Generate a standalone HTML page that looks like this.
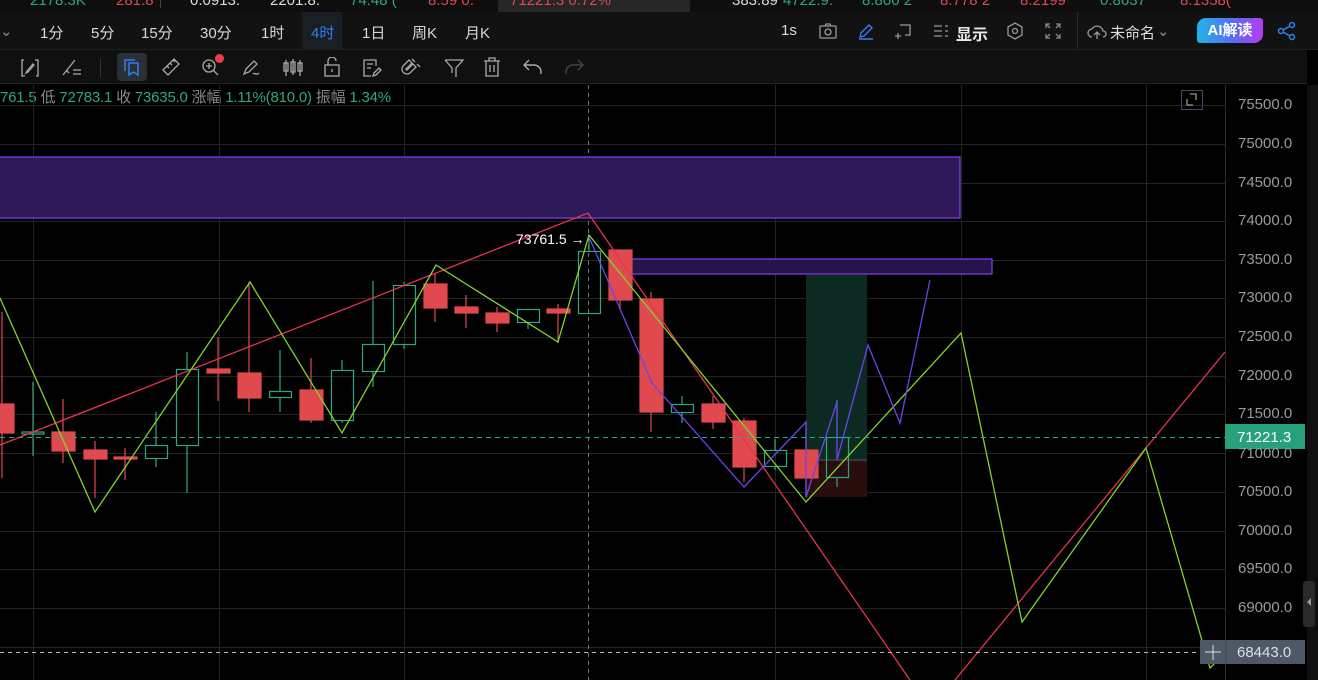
<!DOCTYPE html>
<html><head><meta charset="utf-8">
<style>
*{margin:0;padding:0;box-sizing:border-box}
body{width:1318px;height:680px;overflow:hidden;background:#000;font-family:"Liberation Sans","Noto Sans CJK SC",sans-serif;color:#ddd;position:relative}
.abs{position:absolute}
#top{left:0;top:0;width:1318px;height:12px;background:#0e0e0e;overflow:hidden;font-size:15px;line-height:6px;white-space:nowrap}
#top span{position:absolute;top:-2px}
#tf{left:0;top:12px;width:1318px;height:38px;background:#121212;border-bottom:1px solid #1f1f1f}
#tf .t{position:absolute;top:10px;font-size:15px;color:#d8d8d8}
#tb{left:0;top:50px;width:1307px;height:34px;background:#101010;border-bottom:1px solid #222}
#info{left:0;top:86px;font-size:15px;color:#2ea781;white-space:nowrap;letter-spacing:-0.2px}
#info b{font-weight:normal;color:#8a8a8a}
.ax{position:absolute;left:1238px;font-size:15px;color:#9a9a9a}
</style></head><body>
<div id="top" class="abs">
<span style="left:30px;color:#2ea781">2178.3K</span>
<span style="left:116px;color:#e0484f">281.8</span>
<span style="left:160px;top:-2px;width:1px;height:10px;background:#444"></span>
<span style="left:190px;color:#ddd">0.0913:</span>
<span style="left:270px;color:#ddd">2201.8:</span>
<span style="left:350px;color:#2ea781">74.48 (</span>
<span style="left:428px;color:#e0484f">8.59 0.</span>
<span style="left:498px;width:192px;height:12px;top:0;background:#262626"></span>
<span style="left:510px;color:#e0484f">71221.3 0.72%</span>
<span style="left:732px;color:#ddd">383.89</span>
<span style="left:783px;color:#2ea781">4722.9:</span>
<span style="left:862px;color:#2ea781">8.800 2</span>
<span style="left:940px;color:#e0484f">8.778 2</span>
<span style="left:1020px;color:#e0484f">8.2199</span>
<span style="left:1100px;color:#2ea781">0.8637</span>
<span style="left:1180px;color:#e0484f">8.1358(</span>
</div>
<div id="tf" class="abs">
<span class="t" style="left:0;color:#888">⌄</span>
<span class="t" style="left:40px">1分</span>
<span class="t" style="left:91px">5分</span>
<span class="t" style="left:141px">15分</span>
<span class="t" style="left:200px">30分</span>
<span class="t" style="left:261px">1时</span>
<div class="abs" style="left:302px;top:0;width:40px;height:37px;background:#1a1f26"></div>
<span class="t" style="left:311px;color:#2f7ff0">4时</span>
<span class="t" style="left:362px">1日</span>
<span class="t" style="left:412px">周K</span>
<span class="t" style="left:465px">月K</span>
<span class="t" style="left:781px">1s</span>
<svg class="abs" style="left:818px;top:10px" width="20" height="18" viewBox="0 0 20 18" fill="none" stroke="#999" stroke-width="1.3"><rect x="2" y="4" width="16" height="12" rx="1"/><path d="M7 4l1-2h4l1 2"/><circle cx="10" cy="10" r="3"/></svg>
<svg class="abs" style="left:857px;top:10px" width="18" height="18" viewBox="0 0 18 18" fill="none" stroke="#2f7ff0" stroke-width="1.4"><path d="M3 15l1-4 8-8 3 3-8 8z M2 17h14"/></svg>
<svg class="abs" style="left:895px;top:10px" width="18" height="18" viewBox="0 0 18 18" fill="none" stroke="#999" stroke-width="1.3"><path d="M5 3h10v10h-5M3 11v6M0 14h6"/></svg>
<svg class="abs" style="left:934px;top:13px" width="14" height="12" viewBox="0 0 14 12" fill="none" stroke="#999" stroke-width="1.3"><path d="M0 1h8M0 6h8M0 11h8M11 1h3M11 6h3M11 11h3"/></svg>
<span class="t" style="left:956px;color:#e8e8e8;font-weight:bold;font-size:16px;top:9px">显示</span>
<svg class="abs" style="left:1006px;top:10px" width="18" height="18" viewBox="0 0 18 18" fill="none" stroke="#999" stroke-width="1.3"><path d="M9 1l7 4v8l-7 4-7-4V5z"/><circle cx="9" cy="9" r="2.5"/></svg>
<svg class="abs" style="left:1045px;top:11px" width="16" height="16" viewBox="0 0 16 16" fill="none" stroke="#888" stroke-width="1.3"><path d="M1 5V1h4M11 1h4v4M15 11v4h-4M5 15H1v-4M1 1l4 4M15 1l-4 4M15 15l-4-4M1 15l4-4"/></svg>
<div class="abs" style="left:1077px;top:0;width:1px;height:37px;background:#2a2a2a"></div>
<svg class="abs" style="left:1087px;top:11px" width="20" height="18" viewBox="0 0 20 18" fill="none" stroke="#999" stroke-width="1.3"><path d="M5 14a4 4 0 010-8 6 6 0 0111 2 3 3 0 010 6M10 16V9M7 12l3-3 3 3"/></svg>
<span class="t" style="left:1110px;color:#ddd">未命名</span>
<span class="t" style="left:1157px;color:#888">⌄</span>
<div class="abs" style="left:1197px;top:6px;width:66px;height:25px;border-radius:9px 3px 9px 3px;background:linear-gradient(90deg,#1fb5e6,#5a6cf0 55%,#b43cf0);color:#fff;font-size:15px;font-weight:bold;text-align:center;line-height:25px">AI解读</div>
<svg class="abs" style="left:1277px;top:9px" width="20" height="20" viewBox="0 0 20 20" fill="none" stroke="#2f7ff0" stroke-width="1.5"><circle cx="15" cy="4" r="2.5"/><circle cx="4" cy="10" r="2.5"/><circle cx="15" cy="16" r="2.5"/><path d="M6 9l7-4M6 11l7 4"/></svg>
</div>
<div id="tb" class="abs">
<svg class="abs" style="left:20px;top:8px" width="20" height="20" viewBox="0 0 20 20" fill="none" stroke="#aaa" stroke-width="1.3"><path d="M4 2h-2v16h3M16 18h2V2h-3M7 13l6-7 1 1-6 7-2 1z"/></svg>
<svg class="abs" style="left:61px;top:8px" width="22" height="20" viewBox="0 0 22 20" fill="none" stroke="#aaa" stroke-width="1.3"><path d="M2 17L14 2M12 12h8M12 16h8M5 12l3 3"/></svg>
<div class="abs" style="left:100px;top:9px;width:1px;height:18px;background:#333"></div>
<div class="abs" style="left:117px;top:3px;width:30px;height:28px;border-radius:4px;background:#2b2f36"></div>
<svg class="abs" style="left:123px;top:8px" width="18" height="18" viewBox="0 0 18 18" fill="none" stroke="#2f7ff0" stroke-width="1.5"><path d="M2 13V2h10M6 5h9v12l-4.5-3-4.5 3z"/></svg>
<svg class="abs" style="left:161px;top:7px" width="20" height="20" viewBox="0 0 20 20" fill="none" stroke="#aaa" stroke-width="1.3"><path d="M2 13L13 2l5 5L7 18zM6 9l2 2M9 6l2 2M12 3l2 2"/></svg>
<svg class="abs" style="left:201px;top:7px" width="22" height="22" viewBox="0 0 22 22" fill="none" stroke="#aaa" stroke-width="1.3"><circle cx="8" cy="9" r="6"/><path d="M12 13l5 5M5 9h6M8 6v6"/></svg>
<div class="abs" style="left:215px;top:4px;width:9px;height:9px;border-radius:50%;background:#e8404a"></div>
<svg class="abs" style="left:242px;top:8px" width="20" height="20" viewBox="0 0 20 20" fill="none" stroke="#aaa" stroke-width="1.3"><path d="M2 16l2-5 8-8 3 3-8 8zM11 16c2-2 3 2 6-1"/></svg>
<svg class="abs" style="left:283px;top:8px" width="20" height="18" viewBox="0 0 20 18" fill="none" stroke="#aaa" stroke-width="1.3"><rect x="1" y="5" width="4" height="8"/><rect x="8" y="4" width="4" height="10"/><rect x="15" y="5" width="4" height="8"/><path d="M3 2v16M10 1v16M17 2v16"/></svg>
<svg class="abs" style="left:323px;top:7px" width="18" height="20" viewBox="0 0 18 20" fill="none" stroke="#aaa" stroke-width="1.3"><rect x="2" y="8" width="14" height="11"/><path d="M5 8V4a4 4 0 018 0M9 12v3"/></svg>
<svg class="abs" style="left:362px;top:8px" width="20" height="20" viewBox="0 0 20 20" fill="none" stroke="#aaa" stroke-width="1.3"><path d="M14 8V2H2v16h7M5 6h6M5 10h4M11 18l1-3 5-5 2 2-5 5z"/></svg>
<svg class="abs" style="left:401px;top:8px" width="20" height="20" viewBox="0 0 20 20" fill="none" stroke="#aaa" stroke-width="1.3"><path d="M8 2L2 8a5 5 0 007 7l6-6-3-3-6 6a1 1 0 01-1-1l6-6zM11 1l3 3M16 6l3 3"/></svg>
<svg class="abs" style="left:444px;top:8px" width="20" height="20" viewBox="0 0 20 20" fill="none" stroke="#aaa" stroke-width="1.3"><path d="M1 2h18l-7 8v9M1 2l7 8v5"/></svg>
<svg class="abs" style="left:483px;top:7px" width="18" height="20" viewBox="0 0 18 20" fill="none" stroke="#aaa" stroke-width="1.3"><path d="M1 4h16M6 4V1h6v3M3 4v15h12V4M7 8v7M11 8v7"/></svg>
<svg class="abs" style="left:523px;top:9px" width="20" height="16" viewBox="0 0 20 16" fill="none" stroke="#aaa" stroke-width="1.4"><path d="M6 1L1 6l5 5M1 6h10a7 7 0 017 7v2"/></svg>
<svg class="abs" style="left:564px;top:9px" width="20" height="16" viewBox="0 0 20 16" fill="none" stroke="#444" stroke-width="1.4"><path d="M14 1l5 5-5 5M19 6H9a7 7 0 00-7 7v2"/></svg>
</div>
<div id="info" class="abs">761.5 <b>低</b> 72783.1 <b>收</b> 73635.0 <b>涨幅</b> 1.11%(810.0) <b>振幅</b> 1.34%</div>

<svg class="abs" style="left:0;top:85px" width="1318" height="595" viewBox="0 85 1318 595">
<g stroke="#232323" stroke-width="1">
<path d="M0 105.5H1225M0 144.5H1225M0 183.5H1225M0 221.5H1225M0 260.5H1225M0 298.5H1225M0 337.5H1225M0 376.5H1225M0 414.5H1225M0 453.5H1225M0 492.5H1225M0 531.5H1225M0 569.5H1225M0 608.5H1225M0 647.5H1225"/>
<path d="M33.5 85V680M219.5 85V680M404.5 85V680M775.5 85V680M961.5 85V680M1146.5 85V680"/>
</g>
<path d="M588.5 85V680" stroke="#777" stroke-dasharray="4 4"/>
<rect x="-2" y="157" width="962" height="61" fill="#2d1858" stroke="#8a3cf5" stroke-width="1.2"/>
<rect x="806" y="275" width="61" height="185" fill="#0c2a22"/>
<rect x="806" y="460" width="61" height="37" fill="#2a0e0e"/>
<path d="M806 460H867" stroke="#555"/>
<rect x="620" y="259" width="372" height="15" fill="#251447" stroke="#8a3cf5" stroke-width="1.2"/>
<g stroke-width="1.2">
<g stroke="#e04a4f" fill="#e04a4f">
<path d="M2 312V478M63 399V463M95 441V498M125 448V480M218 337V401M249 282V412M311 358V423M435 273V322M466 295V328M497 307V332M558 304V343M620 250V310M651 292V432M713 396V429M744 418V482M806 422V497"/>
<rect x="-10" y="404" width="24" height="29"/><rect x="52" y="432" width="23" height="19"/><rect x="84" y="450" width="23" height="9"/><rect x="114" y="457" width="23" height="2"/><rect x="207" y="369" width="23" height="4"/><rect x="238" y="373" width="23" height="25"/><rect x="300" y="390" width="23" height="30"/><rect x="424" y="284" width="23" height="24"/><rect x="455" y="307" width="23" height="6"/><rect x="486" y="313" width="23" height="10"/><rect x="547" y="309" width="23" height="4"/><rect x="609" y="250" width="23" height="50"/><rect x="640" y="299" width="23" height="113"/><rect x="702" y="404" width="23" height="18"/><rect x="733" y="421" width="23" height="46"/><rect x="795" y="450" width="23" height="28"/>
</g>
<g stroke="#2ea781" fill="none">
<path d="M33 382V456M156 412V445M156 459V467M187 352V369M187 446V493M280 350V391M280 397V412M342 360V370M342 420V423M373 281V344M373 371V387M404 282V285M404 344V349M528 322V329M589 235V251M682 396V404M682 412V423M775 439V450M775 466V470M837 400V437M837 477V487"/>
<rect x="22" y="432" width="22" height="2"/><rect x="145.5" y="445.5" width="22" height="13"/><rect x="176.5" y="369.5" width="22" height="76"/><rect x="269.5" y="391.5" width="22" height="6"/><rect x="331.5" y="370.5" width="22" height="50"/><rect x="362.5" y="344.5" width="22" height="27"/><rect x="393.5" y="285.5" width="22" height="59"/><rect x="517.5" y="309.5" width="22" height="13"/><rect x="578.5" y="251.5" width="22" height="62"/><rect x="671.5" y="404.5" width="22" height="8"/><rect x="764.5" y="450.5" width="22" height="16"/><rect x="826.5" y="437.5" width="22" height="40"/>
</g>
</g>
<g fill="none" stroke-width="1.3">
<path d="M0 445L588 213L910 680M955 680L1225 352" stroke="#e8334a"/>
<path d="M0 298L95 512L250 282L342 433L436 265L558 342L589 235L806 502L961 333L1022 622L1146 448L1210 668L1218 660" stroke="#7fd42a"/>
<path d="M589 237L652 383L744 487L806 422L806 497L837 402L837 460L868 345L900 423L930 280" stroke="#6a45e8"/>
</g>
<path d="M0 437.5H1225" stroke="#2ea781" stroke-dasharray="5 4"/>
<path d="M0 652.5H1200" stroke="#bbb" stroke-dasharray="4 4"/>
<text x="516" y="244" fill="#fff" font-size="14" font-family="Liberation Sans">73761.5 →</text>
<rect x="1181.5" y="90.5" width="21" height="19" fill="none" stroke="#444a66"/>
<path d="M1187 99v6h6M1190 94h6v6" stroke="#bbb" fill="none"/>
<path d="M1225.5 85V680" stroke="#2a2a2a"/>
<rect x="1307" y="85" width="11" height="595" fill="#0f0f0f"/>
<rect x="1303" y="581" width="12" height="46" rx="3" fill="#2a2a2a"/>
<path d="M1311 598l-4 4 4 4z" fill="#999"/>
<rect x="1225" y="424" width="80" height="25" fill="#26a17c"/>
<text x="1237" y="442" fill="#fff" font-size="15" font-family="Liberation Sans">71221.3</text>
<rect x="1200" y="640" width="105" height="24" fill="#4f5866"/>
<path d="M1226 640V664" stroke="#3a4250"/>
<path d="M1213 645V660M1205 652H1221" stroke="#ddd"/>
<text x="1237" y="657" fill="#dde" font-size="15" font-family="Liberation Sans">68443.0</text>
</svg>
<div class="ax" style="top:96px">75500.0</div>
<div class="ax" style="top:135px">75000.0</div>
<div class="ax" style="top:174px">74500.0</div>
<div class="ax" style="top:212px">74000.0</div>
<div class="ax" style="top:251px">73500.0</div>
<div class="ax" style="top:289px">73000.0</div>
<div class="ax" style="top:328px">72500.0</div>
<div class="ax" style="top:367px">72000.0</div>
<div class="ax" style="top:405px">71500.0</div>
<div class="ax" style="top:445px">71000.0</div>
<div class="ax" style="top:483px">70500.0</div>
<div class="ax" style="top:522px">70000.0</div>
<div class="ax" style="top:560px">69500.0</div>
<div class="ax" style="top:599px">69000.0</div>
</body></html>
